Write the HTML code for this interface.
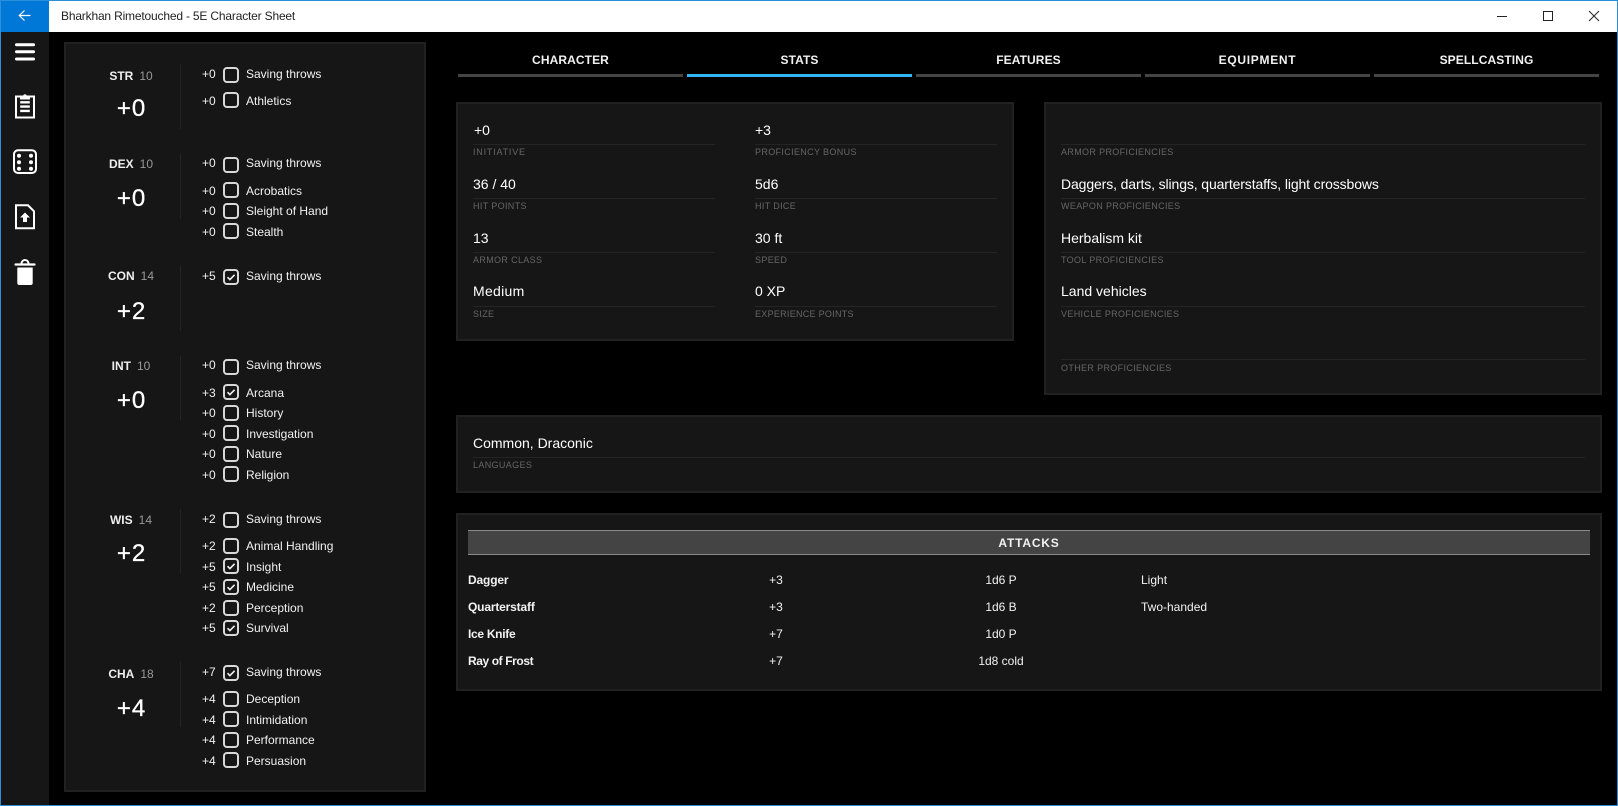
<!DOCTYPE html>
<html><head><meta charset="utf-8"><title>Bharkhan Rimetouched - 5E Character Sheet</title>
<style>
html,body{margin:0;padding:0;background:#000}
#w{position:relative;width:1618px;height:806px;overflow:hidden;background:#000;font-family:"Liberation Sans",sans-serif;color:#fff}
#w div,#w svg{position:absolute}
.p{background:#161616;border:2px solid #212121;box-sizing:border-box}
.t{white-space:nowrap;line-height:20px;height:20px}
.r{font-size:12px;color:#f2f2f2}
.c{width:16px;height:16px;box-sizing:border-box;border:2px solid #d8d8d8;border-radius:4px}
.c svg{left:1px;top:1px}
.ab{left:80px;width:102px;text-align:center;font-size:12px;font-weight:bold;color:#eee}
.ab span{font-weight:normal;color:#999;margin-left:6px}
.val{left:80px;width:103px;text-align:center;font-size:24px;line-height:30px;height:30px;color:#fff;letter-spacing:1px;white-space:nowrap;-webkit-text-stroke:.3px #fff}
.d{left:180px;width:1px;background:#242424}
.tab{top:50px;width:225px;text-align:center;font-size:12px;font-weight:bold;letter-spacing:.1px;color:#f2f2f2}
.bar{top:74px;width:225px;height:3px;background:#444}
.v{font-size:14px;color:#fff}
.l{font-size:9px;letter-spacing:.35px;color:#666}
.h{height:1px;background:#242424}
.a{font-size:12px;color:#f2f2f2}
.n{font-weight:bold;left:468px}
.m{left:736px;width:80px;text-align:center}
.dm{left:941px;width:120px;text-align:center}
.o{left:1141px}
</style></head><body><div id="w">
<div style="left:0;top:0;width:1618px;height:32px;background:#fff"></div>
<div style="left:1px;top:1px;width:48px;height:31px;background:#0078d7"></div>
<div style="left:1px;top:32px;width:48px;height:774px;background:#161616"></div>
<svg style="left:0;top:0" width="50" height="300" viewBox="0 0 50 300">
<path d="M30.500 15.500H19.500M24.500 10.500l-5.200 5 5.200 5" fill="none" stroke="#fff" stroke-width="1.200"/>
<path d="M16.500 44.700H33.500M16.500 51.700H33.500M16.500 59H33.500" stroke="#fff" stroke-width="3" stroke-linecap="round" fill="none"/>
<rect x="16" y="96.500" width="18" height="21" fill="none" stroke="#fff" stroke-width="2"/>
<path d="M20 95.500h3.200a1.900 1.900 0 0 1 3.600 0H30v4H20z" fill="#fff"/>
<path d="M20.200 102.300H29.800M20.200 106.600H29.800M20.200 110.900H29.800" stroke="#fff" stroke-width="2.400" fill="none"/>
<rect x="14" y="150.300" width="22" height="22.700" rx="4" fill="none" stroke="#fff" stroke-width="2"/>
<g fill="#fff"><circle cx="19" cy="155.800" r="2"/><circle cx="31" cy="155.800" r="2"/><circle cx="19" cy="162.300" r="2"/><circle cx="31" cy="162.300" r="2"/><circle cx="19" cy="168.800" r="2"/><circle cx="31" cy="168.800" r="2"/></g>
<path d="M16 205.300H28L34 211.300V228.300H16Z" fill="none" stroke="#fff" stroke-width="2"/>
<path d="M25 212.500l5 5h-3v4.500h-4v-4.500h-3z" fill="#fff"/>
<path d="M15.500 264.500H34.500" stroke="#fff" stroke-width="2.200" stroke-linecap="round"/>
<path d="M21.500 263.500a3.500 3.500 0 0 1 7 0" fill="none" stroke="#fff" stroke-width="2"/>
<path d="M17.300 267.500H32.700V283a2 2 0 0 1-2 2H19.300a2 2 0 0 1-2-2Z" fill="#fff"/>
</svg>
<div class="t" style="left:61px;top:6px;font-size:12px;color:#222;letter-spacing:-.18px">Bharkhan Rimetouched - 5E Character Sheet</div>
<svg style="left:1490px;top:5px" width="120" height="22" viewBox="0 0 120 22">
<path d="M7 11.500H17" stroke="#222" stroke-width="1" fill="none"/>
<rect x="53.500" y="6.500" width="9" height="9" fill="none" stroke="#222" stroke-width="1"/>
<path d="M99 6l10 10M109 6l-10 10" stroke="#222" stroke-width="1" fill="none"/>
</svg>

<div class="p" style="left:64px;top:42px;width:362px;height:750px"></div>

<div class="d" style="top:64px;height:65px"></div>
<div class="d" style="top:154px;height:65px"></div>
<div class="d" style="top:266px;height:65px"></div>
<div class="d" style="top:356px;height:64px"></div>
<div class="d" style="top:509px;height:64px"></div>
<div class="d" style="top:662px;height:65px"></div>

<div class="t ab" style="top:66px">STR<span>10</span></div><div class="val" style="top:94px">+0</div>
<div class="t ab" style="top:154px">DEX<span>10</span></div><div class="val" style="top:184px">+0</div>
<div class="t ab" style="top:266px">CON<span>14</span></div><div class="val" style="top:297px">+2</div>
<div class="t ab" style="top:356px">INT<span>10</span></div><div class="val" style="top:386px">+0</div>
<div class="t ab" style="top:510px">WIS<span>14</span></div><div class="val" style="top:539px">+2</div>
<div class="t ab" style="top:664px">CHA<span>18</span></div><div class="val" style="top:694px">+4</div>

<div class="t r" style="left:202px;top:64px">+0</div><div class="c" style="left:223px;top:67px"></div><div class="t r" style="left:246px;top:64px">Saving throws</div>
<div class="t r" style="left:202px;top:91px">+0</div><div class="c" style="left:223px;top:92px"></div><div class="t r" style="left:246px;top:91px">Athletics</div>

<div class="t r" style="left:202px;top:153px">+0</div><div class="c" style="left:223px;top:157px"></div><div class="t r" style="left:246px;top:153px">Saving throws</div>
<div class="t r" style="left:202px;top:181px">+0</div><div class="c" style="left:223px;top:182px"></div><div class="t r" style="left:246px;top:181px">Acrobatics</div>
<div class="t r" style="left:202px;top:201px">+0</div><div class="c" style="left:223px;top:203px"></div><div class="t r" style="left:246px;top:201px">Sleight of Hand</div>
<div class="t r" style="left:202px;top:222px">+0</div><div class="c" style="left:223px;top:223px"></div><div class="t r" style="left:246px;top:222px">Stealth</div>

<div class="t r" style="left:202px;top:266px">+5</div><div class="c" style="left:223px;top:269px"><svg width="10" height="10" viewBox="0 0 10 10"><path d="M1.500 5.200l2.400 2.400 4.700-4.800" fill="none" stroke="#eee" stroke-width="1.600"/></svg></div><div class="t r" style="left:246px;top:266px">Saving throws</div>

<div class="t r" style="left:202px;top:355px">+0</div><div class="c" style="left:223px;top:359px"></div><div class="t r" style="left:246px;top:355px">Saving throws</div>
<div class="t r" style="left:202px;top:383px">+3</div><div class="c" style="left:223px;top:384px"><svg width="10" height="10" viewBox="0 0 10 10"><path d="M1.500 5.200l2.400 2.400 4.700-4.800" fill="none" stroke="#eee" stroke-width="1.600"/></svg></div><div class="t r" style="left:246px;top:383px">Arcana</div>
<div class="t r" style="left:202px;top:403px">+0</div><div class="c" style="left:223px;top:405px"></div><div class="t r" style="left:246px;top:403px">History</div>
<div class="t r" style="left:202px;top:424px">+0</div><div class="c" style="left:223px;top:425px"></div><div class="t r" style="left:246px;top:424px">Investigation</div>
<div class="t r" style="left:202px;top:444px">+0</div><div class="c" style="left:223px;top:446px"></div><div class="t r" style="left:246px;top:444px">Nature</div>
<div class="t r" style="left:202px;top:465px">+0</div><div class="c" style="left:223px;top:466px"></div><div class="t r" style="left:246px;top:465px">Religion</div>

<div class="t r" style="left:202px;top:509px">+2</div><div class="c" style="left:223px;top:512px"></div><div class="t r" style="left:246px;top:509px">Saving throws</div>
<div class="t r" style="left:202px;top:536px">+2</div><div class="c" style="left:223px;top:538px"></div><div class="t r" style="left:246px;top:536px">Animal Handling</div>
<div class="t r" style="left:202px;top:557px">+5</div><div class="c" style="left:223px;top:558px"><svg width="10" height="10" viewBox="0 0 10 10"><path d="M1.500 5.200l2.400 2.400 4.700-4.800" fill="none" stroke="#eee" stroke-width="1.600"/></svg></div><div class="t r" style="left:246px;top:557px">Insight</div>
<div class="t r" style="left:202px;top:577px">+5</div><div class="c" style="left:223px;top:579px"><svg width="10" height="10" viewBox="0 0 10 10"><path d="M1.500 5.200l2.400 2.400 4.700-4.800" fill="none" stroke="#eee" stroke-width="1.600"/></svg></div><div class="t r" style="left:246px;top:577px">Medicine</div>
<div class="t r" style="left:202px;top:598px">+2</div><div class="c" style="left:223px;top:600px"></div><div class="t r" style="left:246px;top:598px">Perception</div>
<div class="t r" style="left:202px;top:618px">+5</div><div class="c" style="left:223px;top:620px"><svg width="10" height="10" viewBox="0 0 10 10"><path d="M1.500 5.200l2.400 2.400 4.700-4.800" fill="none" stroke="#eee" stroke-width="1.600"/></svg></div><div class="t r" style="left:246px;top:618px">Survival</div>

<div class="t r" style="left:202px;top:662px">+7</div><div class="c" style="left:223px;top:665px"><svg width="10" height="10" viewBox="0 0 10 10"><path d="M1.500 5.200l2.400 2.400 4.700-4.800" fill="none" stroke="#eee" stroke-width="1.600"/></svg></div><div class="t r" style="left:246px;top:662px">Saving throws</div>
<div class="t r" style="left:202px;top:689px">+4</div><div class="c" style="left:223px;top:691px"></div><div class="t r" style="left:246px;top:689px">Deception</div>
<div class="t r" style="left:202px;top:710px">+4</div><div class="c" style="left:223px;top:711px"></div><div class="t r" style="left:246px;top:710px">Intimidation</div>
<div class="t r" style="left:202px;top:730px">+4</div><div class="c" style="left:223px;top:732px"></div><div class="t r" style="left:246px;top:730px">Performance</div>
<div class="t r" style="left:202px;top:751px">+4</div><div class="c" style="left:223px;top:752px"></div><div class="t r" style="left:246px;top:751px">Persuasion</div>

<div class="t tab" style="left:458px">CHARACTER</div><div class="bar" style="left:458px"></div>
<div class="t tab" style="left:687px">STATS</div><div class="bar" style="left:687px;background:#33b5f5"></div>
<div class="t tab" style="left:916px">FEATURES</div><div class="bar" style="left:916px"></div>
<div class="t tab" style="left:1145px;letter-spacing:.7px">EQUIPMENT</div><div class="bar" style="left:1145px"></div>
<div class="t tab" style="left:1374px">SPELLCASTING</div><div class="bar" style="left:1374px"></div>

<div class="p" style="left:456px;top:102px;width:558px;height:239px"></div>
<div class="t v" style="left:474px;top:120px">+0</div><div class="h" style="left:473px;top:144px;width:242px"></div><div class="t l" style="left:473px;top:142px;letter-spacing:.8px">INITIATIVE</div>
<div class="t v" style="left:755px;top:120px">+3</div><div class="h" style="left:755px;top:144px;width:242px"></div><div class="t l" style="left:755px;top:142px">PROFICIENCY BONUS</div>
<div class="t v" style="left:473px;top:174px">36 / 40</div><div class="h" style="left:473px;top:198px;width:242px"></div><div class="t l" style="left:473px;top:196px">HIT POINTS</div>
<div class="t v" style="left:755px;top:174px">5d6</div><div class="h" style="left:755px;top:198px;width:242px"></div><div class="t l" style="left:755px;top:196px">HIT DICE</div>
<div class="t v" style="left:473px;top:228px">13</div><div class="h" style="left:473px;top:252px;width:242px"></div><div class="t l" style="left:473px;top:250px">ARMOR CLASS</div>
<div class="t v" style="left:755px;top:228px">30 ft</div><div class="h" style="left:755px;top:252px;width:242px"></div><div class="t l" style="left:755px;top:250px">SPEED</div>
<div class="t v" style="left:473px;top:281px;letter-spacing:.3px">Medium</div><div class="h" style="left:473px;top:306px;width:242px"></div><div class="t l" style="left:473px;top:304px">SIZE</div>
<div class="t v" style="left:755px;top:281px">0 XP</div><div class="h" style="left:755px;top:306px;width:242px"></div><div class="t l" style="left:755px;top:304px;letter-spacing:.28px">EXPERIENCE POINTS</div>

<div class="p" style="left:1044px;top:102px;width:558px;height:293px"></div>
<div class="h" style="left:1061px;top:144px;width:524px"></div><div class="t l" style="left:1061px;top:142px">ARMOR PROFICIENCIES</div>
<div class="t v" style="left:1061px;top:174px;letter-spacing:-.12px">Daggers, darts, slings, quarterstaffs, light crossbows</div><div class="h" style="left:1061px;top:198px;width:524px"></div><div class="t l" style="left:1061px;top:196px">WEAPON PROFICIENCIES</div>
<div class="t v" style="left:1061px;top:228px">Herbalism kit</div><div class="h" style="left:1061px;top:252px;width:524px"></div><div class="t l" style="left:1061px;top:250px">TOOL PROFICIENCIES</div>
<div class="t v" style="left:1061px;top:281px">Land vehicles</div><div class="h" style="left:1061px;top:306px;width:524px"></div><div class="t l" style="left:1061px;top:304px">VEHICLE PROFICIENCIES</div>
<div class="h" style="left:1061px;top:359px;width:524px"></div><div class="t l" style="left:1061px;top:358px">OTHER PROFICIENCIES</div>

<div class="p" style="left:456px;top:415px;width:1146px;height:78px"></div>
<div class="t v" style="left:473px;top:433px">Common, Draconic</div><div class="h" style="left:473px;top:457px;width:1112px"></div><div class="t l" style="left:473px;top:455px">LANGUAGES</div>

<div class="p" style="left:456px;top:513px;width:1146px;height:178px"></div>
<div style="left:468px;top:530px;width:1122px;height:25px;box-sizing:border-box;background:#444;border-top:1px solid #8a8a8a;border-bottom:1px solid #8a8a8a"></div>
<div class="t" style="left:468px;top:533px;width:1122px;text-align:center;font-size:12px;font-weight:bold;letter-spacing:.8px;color:#f2f2f2">ATTACKS</div>

<div class="t a n" style="top:570px;letter-spacing:-.15px">Dagger</div><div class="t a m" style="top:570px">+3</div><div class="t a dm" style="top:570px">1d6 P</div><div class="t a o" style="top:570px">Light</div>
<div class="t a n" style="top:597px;letter-spacing:-.17px">Quarterstaff</div><div class="t a m" style="top:597px">+3</div><div class="t a dm" style="top:597px">1d6 B</div><div class="t a o" style="top:597px">Two-handed</div>
<div class="t a n" style="top:624px;letter-spacing:-.3px">Ice Knife</div><div class="t a m" style="top:624px">+7</div><div class="t a dm" style="top:624px">1d0 P</div>
<div class="t a n" style="top:651px;letter-spacing:-.4px">Ray of Frost</div><div class="t a m" style="top:651px">+7</div><div class="t a dm" style="top:651px">1d8 cold</div>

<div style="left:0;top:0;width:1618px;height:1px;background:#2b8fdc"></div>
<div style="left:0;top:0;width:1px;height:806px;background:#2b8fdc"></div>
<div style="left:1617px;top:0;width:1px;height:806px;background:#2b8fdc"></div>
<div style="left:0;top:805px;width:1618px;height:1px;background:#2b8fdc"></div>
</div></body></html>
